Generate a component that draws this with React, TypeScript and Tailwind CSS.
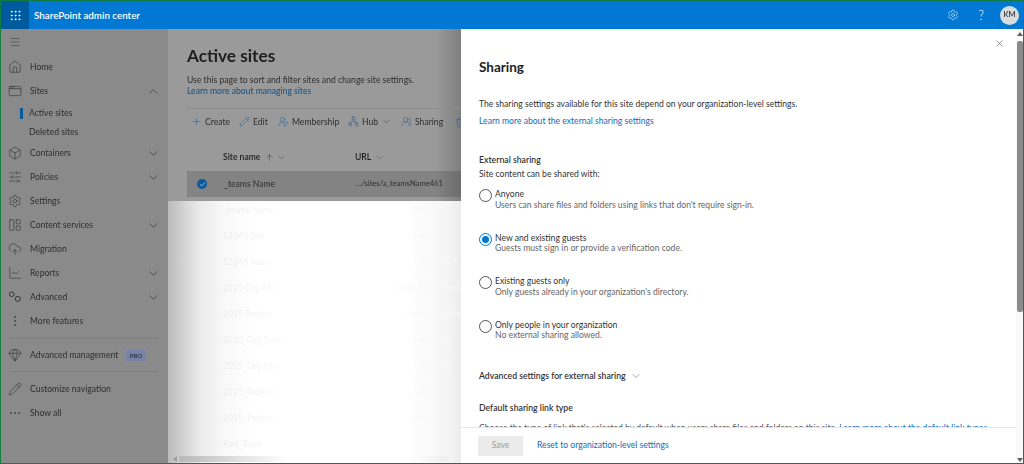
import React from "react";
import { Home, AppWindow, Box, SlidersHorizontal, Settings, LayoutPanelLeft, CloudUpload, ChartLine, EllipsisVertical, Gem, Pencil, Ellipsis, ChevronDown, ChevronUp, Menu, Plus, UserRoundPen, Network, UsersRound, Trash2, ArrowUp, X, Check, Grip } from "lucide-react";

type NavItem = { label: string; icon: any; chevron?: "up" | "down" };

function TwoCircles({ size, strokeWidth, className }: { size: number; strokeWidth: number; className?: string }) {
  return (
    <svg width={size} height={size} viewBox="0 0 15 15" fill="none" stroke="currentColor" strokeWidth={strokeWidth} className={className}>
      <circle cx="4" cy="4.5" r="2.5" />
      <circle cx="10.5" cy="9.5" r="2.7" />
    </svg>
  );
}

function Row({ item }: { item: NavItem }) {
  const I = item.icon;
  return (
    <div className="flex items-center pl-[7px] pr-[7px] h-[24px]">
      <I size={14} strokeWidth={1} className="text-[#2e2e2e] shrink-0" />
      <span className="ml-[8px] text-[8.6px] text-[#2e2e2e] flex-1 whitespace-nowrap">{item.label}</span>
      {item.chevron === "up" && <ChevronUp size={15} strokeWidth={1} className="text-[#2e2e2e]" />}
      {item.chevron === "down" && <ChevronDown size={15} strokeWidth={1} className="text-[#2e2e2e]" />}
    </div>
  );
}

function Sidebar() {
  return (
    <div className="w-[167px] shrink-0 bg-[#8a8a8a] flex flex-col pt-[1px]">
      <div className="h-[24px] pl-[8px] flex items-center"><Menu size={12} strokeWidth={1} className="text-[#2e2e2e]" /></div>
      <div className="h-[1px]" />
      <Row item={{ label: "Home", icon: Home }} />
      <Row item={{ label: "Sites", icon: AppWindow, chevron: "up" }} />
      <div className="h-[20px] flex items-center pl-[19px]">
        <div className="w-[3px] h-[11px] bg-[#0a5a9c]" />
        <span className="ml-[6px] text-[8.6px] text-[#2e2e2e]">Active sites</span>
      </div>
      <div className="h-[18px] flex items-center pl-[28px]"><span className="text-[8.6px] text-[#2e2e2e]">Deleted sites</span></div>
      <Row item={{ label: "Containers", icon: Box, chevron: "down" }} />
      <Row item={{ label: "Policies", icon: SlidersHorizontal, chevron: "down" }} />
      <Row item={{ label: "Settings", icon: Settings }} />
      <Row item={{ label: "Content services", icon: LayoutPanelLeft, chevron: "down" }} />
      <Row item={{ label: "Migration", icon: CloudUpload }} />
      <Row item={{ label: "Reports", icon: ChartLine, chevron: "down" }} />
      <Row item={{ label: "Advanced", icon: TwoCircles, chevron: "down" }} />
      <Row item={{ label: "More features", icon: EllipsisVertical }} />
      <div className="mx-[9px] my-[5px] border-t border-[#7e7e7e]" />
      <div className="flex items-center pl-[7px] h-[22px]">
        <Gem size={14} strokeWidth={1} className="text-[#2e2e2e]" />
        <span className="ml-[8px] w-[88px] text-[8.6px] text-[#2e2e2e] whitespace-nowrap">Advanced management</span>
        <span className="ml-[8px] w-[20px] h-[11px] bg-[#7683a8] text-[#30364c] text-[6px] font-bold flex items-center justify-center">PRO</span>
      </div>
      <div className="mx-[9px] mt-[5px] mb-[5px] border-t border-[#7e7e7e]" />
      <Row item={{ label: "Customize navigation", icon: Pencil }} />
      <Row item={{ label: "Show all", icon: Ellipsis }} />
    </div>
  );
}

function Tool({ icon: I, label, chev, w }: { icon: any; label: string; chev?: boolean; w: string }) {
  return (
    <div className={`flex items-center gap-[3px] shrink-0 ${w}`}>
      <I size={11} strokeWidth={1} className="text-[#0a5a9c] shrink-0" />
      <span className="text-[8.6px] text-[#2e2e2e]">{label}</span>
      {chev && <ChevronDown size={11} strokeWidth={1} className="text-[#2e2e2e]" />}
    </div>
  );
}

const faint: [string, string][] = [
  ["_teams Name", ".../sites/a"],
  ["12345 Site", ".../sites"],
  ["12345 Team", ".../sites/1234"],
  ["2025 Org Site", ".../sites/Orgcanada"],
  ["2025 Project", ".../sites/Projectd"],
  ["2025_Org Team", ".../sites/Org"],
  ["2025_Org Site", ".../sites/Org"],
  ["2025_Project", ".../sites"],
  ["2025_Project", ".../sites"],
  ["Aari_Team", ""],
];

function Main() {
  return (
    <div className="w-[293px] shrink-0 flex flex-col overflow-hidden">
      <div className="h-[172px] shrink-0 bg-[linear-gradient(90deg,#9a9a9a_268px,#7f7f7f_293px)] overflow-hidden">
        <div className="pl-[19px] pt-[14px]">
          <div className="text-[17.2px] leading-[26px] font-bold text-[#1e1e1e]">Active sites</div>
          <div className="mt-[5px] text-[8.6px] leading-[12px] text-[#2e2e2e] whitespace-nowrap">Use this page to sort and filter sites and change site settings.</div>
          <div className="text-[8.6px] leading-[12px] mt-[-1px] text-[#0d4f86]">Learn more about managing sites</div>
          <div className="mt-[11px] border-t border-[#8c8c8c] flex items-center h-[27px] pl-[4px] w-[274px] overflow-hidden">
            <Tool icon={Plus} label="Create" w="w-[48px]" />
            <Tool icon={Pencil} label="Edit" w="w-[39px]" />
            <Tool icon={UserRoundPen} label="Membership" w="w-[70px]" />
            <Tool icon={Network} label="Hub" chev w="w-[53px]" />
            <Tool icon={UsersRound} label="Sharing" w="w-[54px]" />
            <Trash2 size={11} strokeWidth={1} className="text-[#0a5a9c] shrink-0" />
          </div>
        </div>
        <div className="pl-[55px] mt-[10px] h-[24px] flex items-center text-[8.6px] font-semibold text-[#1e1e1e] whitespace-nowrap">
          <span className="w-[40px]">Site name</span>
          <ArrowUp size={9} strokeWidth={1} className="ml-[2px]" />
          <ChevronDown size={11} strokeWidth={1} className="ml-[2px] text-[#444]" />
          <span className="ml-[68px]">URL</span>
          <ChevronDown size={11} strokeWidth={1} className="ml-[3px] text-[#444]" />
        </div>
        <div className="ml-[19px] mt-[2px] h-[26px] bg-black/15 flex items-center pl-[10px] text-[8.6px] text-[#2e2e2e] whitespace-nowrap">
          <span className="w-[10px] h-[10px] rounded-full bg-[#0a5a9c] flex items-center justify-center">
            <Check size={7} strokeWidth={2} className="text-white" />
          </span>
          <span className="ml-[17px] w-[132px]">_teams Name</span>
          <span className="text-[7.6px]">.../sites/a_teamsName461</span>
        </div>
      </div>
      <div className="flex-1 min-h-0 bg-[linear-gradient(90deg,#bcbcbc_1px,#d4d4d4_16px,#eaeaea_32px,#f8f8f8_55px,#ffffff_85px,#ffffff_240px,#f5f5f5_280px,#ececec_293px)] flex flex-col overflow-hidden">
        <div className="flex-1 min-h-0 pl-[55px] overflow-hidden">
          {faint.map(([t, u], i) => (
            <div key={i} className="h-[26px] first:mt-[-4px] flex items-center text-[8.6px] whitespace-nowrap">
              <span className="w-[184px] bg-[linear-gradient(90deg,#ebebeb,#f6f6f6_30%,#ffffff_55%)] bg-clip-text text-transparent">{t}</span>
              <span className="text-[#f7f7f7]">{u}</span>
            </div>
          ))}
        </div>
        <div className="h-[8px] shrink-0 flex items-center pl-[5px]">
          <div className="w-0 h-0 border-y-[3px] border-y-transparent border-r-[4px] border-r-[#a0a0a0]" />
          <div className="ml-[2px] w-[270px] h-[6px] rounded-[2px] bg-[linear-gradient(90deg,#b8b8b8,#dddddd_20%,#ffffff_40%,#ffffff_85%,#eeeeee)]" />
        </div>
      </div>
    </div>
  );
}

function Opt({ label, desc, checked }: { label: string; desc: string; checked?: boolean }) {
  return (
    <div className="flex items-start gap-[3px]">
      <span className={`mt-[1px] w-[13px] h-[13px] rounded-full border shrink-0 flex items-center justify-center ${checked ? "border-[#0078d4]" : "border-[#555]"}`}>
        {checked && <span className="w-[7px] h-[7px] rounded-full bg-[#0078d4]" />}
      </span>
      <div className="whitespace-nowrap">
        <div className="text-[8.6px] leading-[12px] text-[#333]">{label}</div>
        <div className="text-[8.6px] leading-[11px] mt-[-0.5px] text-[#666]">{desc}</div>
      </div>
    </div>
  );
}

function Panel() {
  return (
    <div className="flex-1 bg-white flex min-w-0">
      <div className="flex-1 flex flex-col min-w-0">
        <div className="flex-1 min-h-0 overflow-hidden pl-[18px] relative">
          <X size={11} strokeWidth={1} className="absolute right-[11px] top-[9px] text-[#333]" />
          <div className="pt-[30px] text-[13.5px] leading-[16px] font-bold text-[#1e1e1e]">Sharing</div>
          <div className="mt-[23px] text-[8.6px] leading-[12px] text-[#333] whitespace-nowrap">The sharing settings available for this site depend on your organization-level settings.</div>
          <div className="mt-[5px] text-[8.6px] leading-[12px] text-[#0f6cbd]">Learn more about the external sharing settings</div>
          <div className="mt-[27px] text-[8.7px] leading-[12px] font-semibold text-[#333]">External sharing</div>
          <div className="mt-[2px] text-[8.6px] leading-[12px] text-[#333]">Site content can be shared with:</div>
          <div className="mt-[8px] flex flex-col gap-[21px]">
            <Opt label="Anyone" desc="Users can share files and folders using links that don't require sign-in." />
            <Opt label="New and existing guests" desc="Guests must sign in or provide a verification code." checked />
            <Opt label="Existing guests only" desc="Only guests already in your organization's directory." />
            <Opt label="Only people in your organization" desc="No external sharing allowed." />
          </div>
          <div className="mt-[29px] flex items-center text-[8.7px] leading-[12px] font-semibold text-[#333]">
            Advanced settings for external sharing
            <ChevronDown size={12} strokeWidth={1} className="ml-[4px] text-[#555]" />
          </div>
          <div className="mt-[20px] text-[8.7px] leading-[12px] font-semibold text-[#333]">Default sharing link type</div>
          <div className="mt-[8px] text-[8.6px] leading-[12px] text-[#555] whitespace-nowrap">Choose the type of link that's selected by default when users share files and folders on this site. <span className="text-[#0f6cbd]">Learn more about the default link types</span></div>
        </div>
        <div className="h-[36px] shrink-0 bg-white border-t border-[#e6e6e6] flex items-center pl-[17px]">
          <div className="w-[45px] h-[20px] bg-[#ebebeb] flex items-center justify-center text-[8.6px] text-[#9e9e9e]">Save</div>
          <span className="ml-[14px] text-[8.6px] text-[#0f6cbd]">Reset to organization-level settings</span>
        </div>
      </div>
      <div className="w-[7px] shrink-0 bg-[#fafafa] flex flex-col items-center pt-[3px] pb-[1px]">
        <div className="w-0 h-0 border-x-[3px] border-x-transparent border-b-[4px] border-b-[#606060]" />
        <div className="w-[6px] h-[271px] mt-[5px] bg-[#8c8c8c] rounded-[2px]" />
        <div className="flex-1" />
        <div className="w-0 h-0 border-x-[3px] border-x-transparent border-t-[4px] border-t-[#606060]" />
      </div>
    </div>
  );
}

export default function App() {
  return (
    <div className="w-[1024px] h-[464px] overflow-hidden border border-[#107c41] flex flex-col font-['Lato',sans-serif] blur-[0.3px]">
      <div className="h-[28px] shrink-0 bg-[#0078d4] flex items-center text-white">
        <div className="w-[28px] h-full bg-[#005a9e] flex items-center justify-center"><Grip size={13} strokeWidth={1.5} /></div>
        <span className="ml-[5px] text-[9.8px] font-semibold">SharePoint admin center</span>
        <div className="flex-1" />
        <Settings size={12} strokeWidth={1} />
        <span className="ml-[19px] text-[13px] font-light leading-none">?</span>
        <div className="ml-[16px] mr-[4px] w-[19px] h-[19px] rounded-full bg-[#d8dde0] text-[#333] text-[7.5px] font-semibold flex items-center justify-center">KM</div>
      </div>
      <div className="flex-1 flex min-h-0">
        <Sidebar />
        <Main />
        <Panel />
      </div>
    </div>
  );
}
